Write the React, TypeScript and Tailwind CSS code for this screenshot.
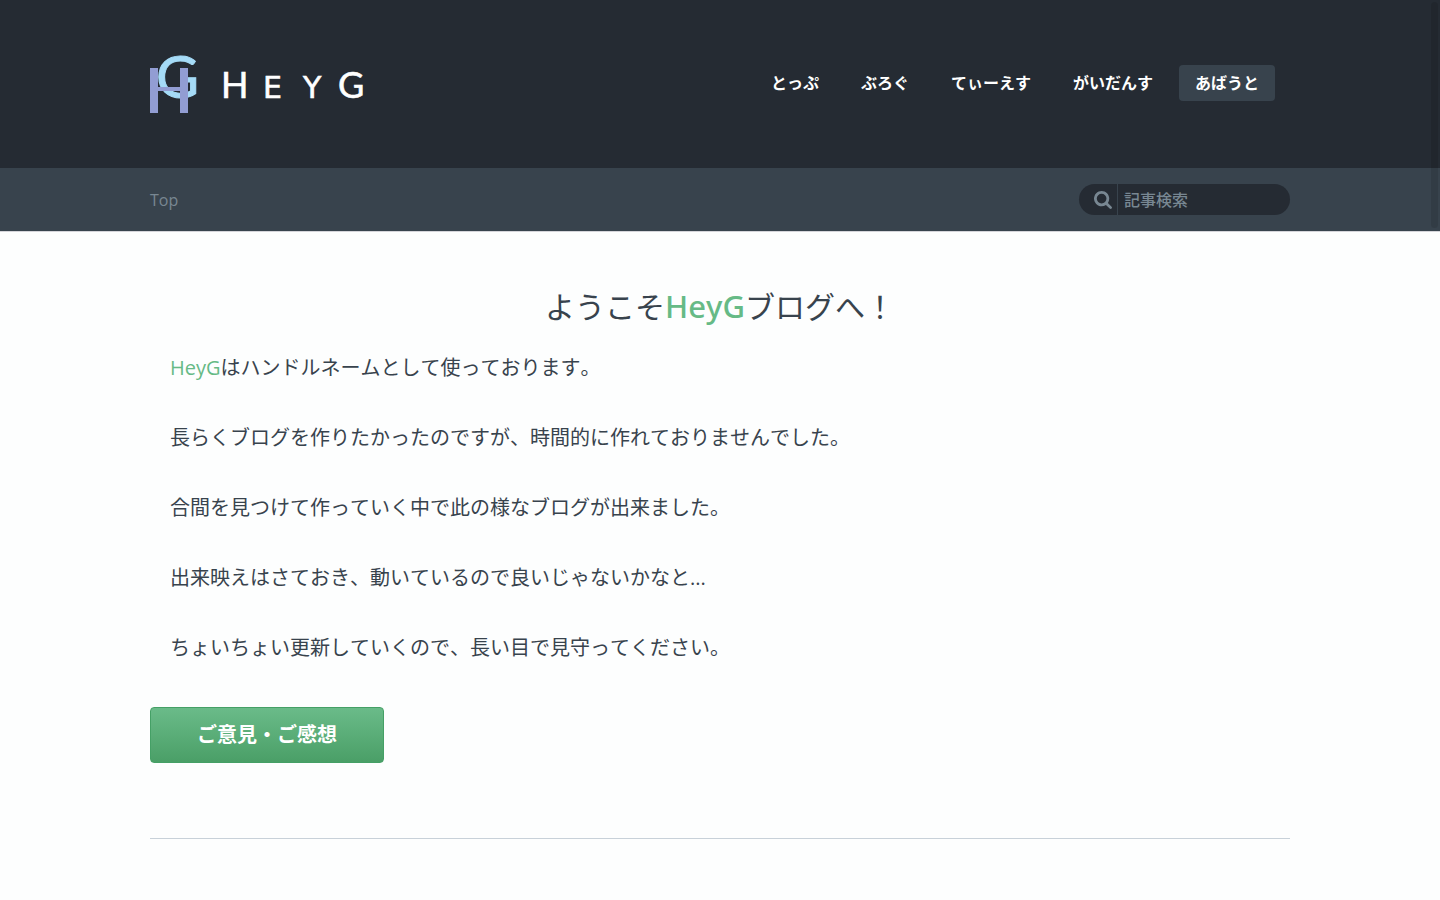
const navItems = [
  { label: "とっぷ", active: false },
  { label: "ぶろぐ", active: false },
  { label: "てぃーえす", active: false },
  { label: "がいだんす", active: false },
  { label: "あばうと", active: true },
];

const paragraphs = [
  "長らくブログを作りたかったのですが、時間的に作れておりませんでした。",
  "合間を見つけて作っていく中で此の様なブログが出来ました。",
  "出来映えはさておき、動いているので良いじゃないかなと...",
  "ちょいちょい更新していくので、長い目で見守ってください。",
];

function Logo() {
  return (
    <svg width="216" height="84" viewBox="0 -13 216 84" role="img" aria-label="HeyG" className="block overflow-visible">
      <text x="6" y="44" fontSize="59" fill="#a5dbf7" stroke="#a5dbf7" strokeWidth="1" fontFamily="Lato, sans-serif">G</text>
      <g fill="#929dd3">
        <rect x="0" y="14" width="8" height="45" />
        <rect x="30" y="14" width="8" height="45" />
        <rect x="8" y="33" width="22" height="4" />
      </g>
      <g fill="#ffffff" stroke="#ffffff" strokeWidth="0.6" fontFamily="Lato, sans-serif">
        <text x="71" y="44" fontSize="36">H</text>
        <text x="113" y="44" fontSize="30" fontFamily="'DejaVu Sans', sans-serif">E</text>
        <text x="153" y="44" fontSize="30" fontFamily="'DejaVu Sans', sans-serif">Y</text>
        <text x="188" y="44" fontSize="36">G</text>
      </g>
    </svg>
  );
}

function SearchIcon() {
  return (
    <svg width="18" height="18" viewBox="0 0 1664 1664" fill="currentColor" aria-hidden="true">
      <path d="M1152 704q0-185-131.5-316.5t-316.5-131.5-316.5 131.5-131.5 316.5 131.5 316.5 316.5 131.5 316.5-131.5 131.5-316.5zm512 832q0 52-38 90t-90 38q-54 0-90-38l-343-342q-179 124-399 124-143 0-273.5-55.5t-225-150-150-225-55.5-273.5 55.5-273.5 150-225 225-150 273.5-55.5 273.5 55.5 225 150 150 225 55.5 273.5q0 220-124 399l343 343q37 37 37 90z" />
    </svg>
  );
}

function Header() {
  return (
    <header className="bg-[#252b33]">
      <div className="mx-auto flex h-[168px] max-w-[1140px] items-center justify-between pb-[2px]">
        <a href="#top">
          <Logo />
        </a>
        <nav className="flex gap-[10px] pr-[15px]">
          {navItems.map((item) => (
            <a
              key={item.label}
              href="#"
              className={
                item.active
                  ? "rounded bg-[#38434d] px-4 py-1.5 text-base font-bold text-white"
                  : "rounded px-4 py-1.5 text-base font-bold text-white"
              }
            >
              {item.label}
            </a>
          ))}
        </nav>
      </div>
    </header>
  );
}

function SubBar() {
  return (
    <div className="border-b border-[#d5d5da] bg-[#38434d]">
      <div className="mx-auto flex h-[63px] max-w-[1140px] items-center justify-between">
        <a href="#top" className="text-base text-[#788792]">
          Top
        </a>
        <form className="flex h-[31px] w-[211px] overflow-hidden rounded-full bg-[#252b33]">
          <label
            htmlFor="search"
            aria-label="記事検索"
            className="flex w-[39px] shrink-0 items-center justify-end border-r border-[#38434d] pr-[5px] text-[#788792]"
          >
            <SearchIcon />
          </label>
          <input
            id="search"
            type="search"
            placeholder="記事検索"
            className="min-w-0 flex-1 bg-transparent px-[6px] text-base font-medium text-[#788792] outline-none placeholder:text-[#788792]"
          />
        </form>
      </div>
    </div>
  );
}

export default function App() {
  return (
    <div className="relative min-h-screen bg-[#fdfefe] font-['Open_Sans','Noto_Sans_CJK_JP',sans-serif] text-[#38434d] [font-kerning:none]">
      <Header />
      <SubBar />
      <div className="absolute top-[2px] right-[2px] h-[226px] w-[7px] rounded-full bg-black/10" />
      <main className="mx-auto max-w-[1140px] pt-[49px]">
        <h1 className="text-center text-[30px] leading-[50px] font-normal">
          ようこそ
          <span className="font-['Noto_Sans','Open_Sans',sans-serif] text-[31px] font-medium text-[#66ba86]">HeyG</span>
          ブログへ！
        </h1>
        <div className="flex flex-col gap-10 px-5 pt-[21px] text-xl leading-[30px]">
          <p>
            <span className="text-[#66ba86]">HeyG</span>はハンドルネームとして使っております。
          </p>
          {paragraphs.map((text) => (
            <p key={text}>{text}</p>
          ))}
        </div>
        <button
          type="button"
          className="mt-11 block h-14 w-[234px] rounded border border-[#45a066] bg-linear-to-b from-[#6abb89] to-[#4a9f67] text-xl font-bold text-white"
        >
          ご意見・ご感想
        </button>
        <hr className="mt-[75px] border-[#c8d1d9]" />
      </main>
    </div>
  );
}
